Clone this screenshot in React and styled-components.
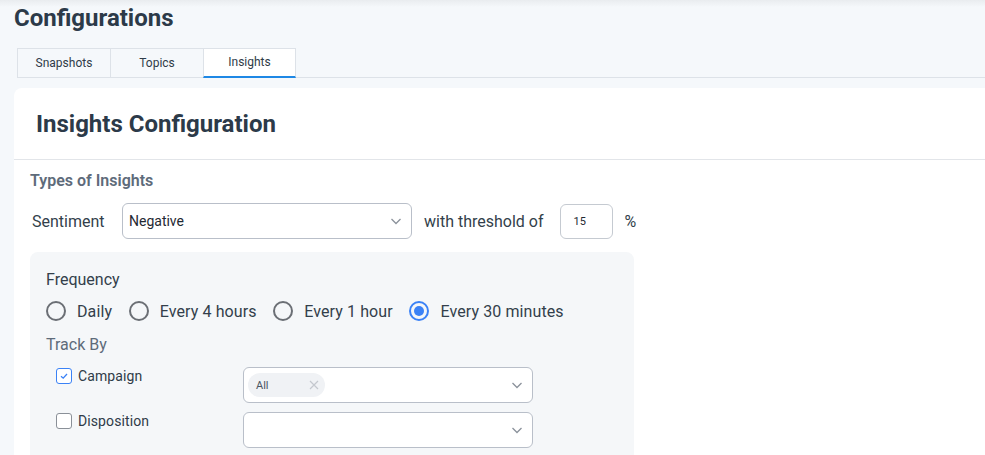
import React, { useState } from "react";
import styled, { createGlobalStyle } from "styled-components";

const GlobalStyle = createGlobalStyle`
  html, body {
    margin: 0;
    padding: 0;
    height: 100%;
    overflow: hidden;
  }
  body {
    font-family: Roboto, "Liberation Sans", Arial, sans-serif;
    background: linear-gradient(#e9ecef 0, #f5f8fb 7px);
    color: #2f3b48;
  }
`;

const Page = styled.div`
  padding: 4px 0 0 14px;
`;

const PageTitle = styled.h1`
  margin: 0;
  font-size: 24px;
  line-height: 28px;
  font-weight: 700;
  color: #2c3a49;
`;

const TabBar = styled.div`
  display: flex;
  margin: 16px 0 0 3px;
  border-bottom: 1px solid #dde2e8;
`;

const Tab = styled.button`
  box-sizing: border-box;
  width: ${(p) => (p.$active ? 93 : 94)}px;
  height: 30px;
  margin: 0 0 -1px -1px;
  &:first-child { margin-left: 0; }
  padding: 0 0 1px;
  font-family: inherit;
  font-size: 12px;
  color: #2f3b48;
  background: ${(p) => (p.$active ? "#ffffff" : "#f5f8fb")};
  border: 1px solid #dde2e8;
  border-bottom: ${(p) => (p.$active ? "2px solid #1e88e5" : "1px solid #dde2e8")};
  cursor: pointer;
`;

const Card = styled.section`
  margin-top: 10px;
  background: #ffffff;
  border-radius: 8px 0 0 0;
  min-height: 400px;
`;

const CardHeader = styled.div`
  height: 71px;
  display: flex;
  align-items: center;
  padding-left: 22px;
  border-bottom: 1px solid #e2e5e9;
`;

const CardTitle = styled.h2`
  margin: 0;
  font-size: 24px;
  font-weight: 700;
  color: #2c3a49;
`;

const CardBody = styled.div`
  padding: 11px 16px 0;
`;

const SectionTitle = styled.div`
  font-size: 16px;
  line-height: 20px;
  font-weight: 600;
  color: #5e6b7a;
`;

const SentimentRow = styled.div`
  display: flex;
  align-items: center;
  margin-top: 12px;
  padding-left: 2px;
  font-size: 16px;
  color: #333f4b;
`;

const RowLabel = styled.span`
  width: 90px;
`;

const Select = styled.div`
  box-sizing: border-box;
  width: ${(p) => p.$width}px;
  height: 36px;
  display: flex;
  align-items: center;
  padding: 0 8px 0 ${(p) => (p.$chips ? 4 : 6)}px;
  background: #ffffff;
  border: 1px solid #b9bfc9;
  border-radius: 6px;
  font-size: 14px;
  color: #1f2933;
`;

const SelectValue = styled.span`
  flex: 1;
`;

const Chevron = () => (
  <svg width="14" height="14" viewBox="0 0 14 14" fill="none">
    <path d="M2.5 5 L7 9.5 L11.5 5" stroke="#8b929b" strokeWidth="1.3" />
  </svg>
);

const ThresholdText = styled.span`
  margin: 0 16px 0 12px;
`;

const NumberBox = styled.div`
  box-sizing: border-box;
  width: 53px;
  height: 35px;
  display: flex;
  align-items: center;
  padding-left: 13px;
  border: 1px solid #c5cad1;
  border-radius: 6px;
  font-size: 11px;
  color: #1f2933;
`;

const Percent = styled.span`
  margin-left: 12px;
`;

const Panel = styled.div`
  box-sizing: border-box;
  width: 604px;
  margin-top: 13px;
  padding: 18px 16px 20px;
  background: #f5f7f9;
  border-radius: 8px;
`;

const PanelLabel = styled.div`
  font-size: 16px;
  line-height: 20px;
  color: ${(p) => (p.$muted ? "#5e6b7a" : "#333f4b")};
  margin-top: ${(p) => p.$top || 0}px;
`;

const RadioRow = styled.div`
  display: flex;
  gap: 16.7px;
  margin-top: 11px;
`;

const RadioOption = styled.label`
  display: flex;
  align-items: center;
  gap: 11px;
  font-size: 16px;
  letter-spacing: 0.1px;
  color: #333f4b;
  cursor: pointer;
`;

const RadioCircle = styled.span`
  box-sizing: border-box;
  width: 20px;
  height: 20px;
  border-radius: 50%;
  border: 2px solid ${(p) => (p.$checked ? "#3b82f6" : "#6b6f75")};
  display: flex;
  align-items: center;
  justify-content: center;
  &::after {
    content: "";
    width: 10px;
    height: 10px;
    border-radius: 50%;
    background: ${(p) => (p.$checked ? "#3b82f6" : "transparent")};
  }
`;

const TrackRow = styled.div`
  display: flex;
  align-items: flex-start;
  margin-top: ${(p) => p.$top}px;
`;

const CheckLabel = styled.label`
  width: 187px;
  margin-left: 10px;
  padding-top: 1px;
  display: flex;
  align-items: center;
  gap: 6px;
  font-size: 14px;
  line-height: 16px;
  letter-spacing: 0.1px;
  color: #2f3b48;
  cursor: pointer;
`;

const Box = styled.span`
  box-sizing: border-box;
  width: 16px;
  height: 16px;
  border-radius: 3px;
  border: 1px solid ${(p) => (p.$checked ? "#3b82f6" : "#8a9098")};
  background: #ffffff;
  display: flex;
  align-items: center;
  justify-content: center;
`;

const Chip = styled.span`
  box-sizing: border-box;
  width: 77px;
  height: 24px;
  display: flex;
  align-items: center;
  justify-content: space-between;
  padding: 0 6px 0 8px;
  background: #f0f2f5;
  border-radius: 12px;
  font-size: 11px;
  color: #4a5563;
`;

const ChipRemove = () => (
  <svg width="10" height="10" viewBox="0 0 10 10">
    <path d="M1 1 L9 9 M9 1 L1 9" stroke="#c4c8ce" strokeWidth="1.2" />
  </svg>
);

const Spacer = styled.span`
  flex: 1;
`;

const frequencies = ["Daily", "Every 4 hours", "Every 1 hour", "Every 30 minutes"];

export default function App() {
  const [freq, setFreq] = useState("Every 30 minutes");
  const [campaign, setCampaign] = useState(true);
  const [disposition, setDisposition] = useState(false);

  return (
    <>
      <GlobalStyle />
      <Page>
        <PageTitle>Configurations</PageTitle>
        <TabBar>
          <Tab>Snapshots</Tab>
          <Tab>Topics</Tab>
          <Tab $active>Insights</Tab>
        </TabBar>
        <Card>
          <CardHeader>
            <CardTitle>Insights Configuration</CardTitle>
          </CardHeader>
          <CardBody>
            <SectionTitle>Types of Insights</SectionTitle>
            <SentimentRow>
              <RowLabel>Sentiment</RowLabel>
              <Select $width={290}>
                <SelectValue>Negative</SelectValue>
                <Chevron />
              </Select>
              <ThresholdText>with threshold of</ThresholdText>
              <NumberBox>15</NumberBox>
              <Percent>%</Percent>
            </SentimentRow>
            <Panel>
              <PanelLabel>Frequency</PanelLabel>
              <RadioRow>
                {frequencies.map((f) => (
                  <RadioOption key={f} onClick={() => setFreq(f)}>
                    <RadioCircle $checked={freq === f} />
                    {f}
                  </RadioOption>
                ))}
              </RadioRow>
              <PanelLabel $muted $top={14}>Track By</PanelLabel>
              <TrackRow $top={12}>
                <CheckLabel onClick={() => setCampaign(!campaign)}>
                  <Box $checked={campaign}>
                    {campaign && (
                      <svg width="10" height="10" viewBox="0 0 10 10">
                        <path d="M2 5.2 L4.2 7.2 L8 3" stroke="#3b82f6" strokeWidth="1.3" fill="none" />
                      </svg>
                    )}
                  </Box>
                  Campaign
                </CheckLabel>
                <Select $width={290} $chips>
                  <Chip>
                    All
                    <ChipRemove />
                  </Chip>
                  <Spacer />
                  <Chevron />
                </Select>
              </TrackRow>
              <TrackRow $top={9}>
                <CheckLabel onClick={() => setDisposition(!disposition)}>
                  <Box $checked={disposition} />
                  Disposition
                </CheckLabel>
                <Select $width={290}>
                  <Spacer />
                  <Chevron />
                </Select>
              </TrackRow>
            </Panel>
          </CardBody>
        </Card>
      </Page>
    </>
  );
}
